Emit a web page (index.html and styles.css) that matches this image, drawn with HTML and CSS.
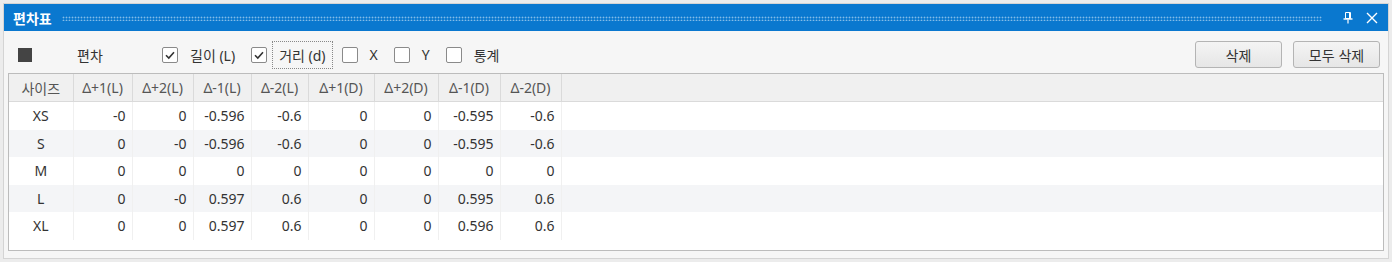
FILE: index.html
```html
<!DOCTYPE html>
<html lang="ko">

<head>
    <meta charset="UTF-8">
    <title>편차표</title>
    <link rel="stylesheet" href="styles.css">
</head>

<body>
    <div class="panel">
        <div class="titlebar">
            <span class="title">편차표</span>
            <span class="grip"></span>
            <span class="tb-btn">
                <svg width="10" height="12" viewBox="0 0 10 12">
                    <path d="M2.5 0.5h5v6h-5z M6.5 0.5v6" fill="none" stroke="#fff" stroke-width="1" />
                    <path d="M0.5 7h9" stroke="#fff" stroke-width="1.4" />
                    <path d="M5 7.5v4" stroke="#fff" stroke-width="1.2" />
                </svg>
            </span>
            <span class="tb-btn">
                <svg width="12" height="12" viewBox="0 0 12 12">
                    <path d="M1 1l10 10M11 1L1 11" stroke="#fff" stroke-width="1.4" />
                </svg>
            </span>
        </div>

        <div class="toolbar">
            <span class="swatch"></span>
            <span class="legend">편차</span>

            <span class="box first"><svg width="14" height="14" viewBox="0 0 14 14"><path d="M3 7.2l2.8 2.8 5.2-5.8" fill="none" stroke="#333" stroke-width="1.6" /></svg></span>
            <span class="check-text">길이 (L)</span>

            <span class="box"><svg width="14" height="14" viewBox="0 0 14 14"><path d="M3 7.2l2.8 2.8 5.2-5.8" fill="none" stroke="#333" stroke-width="1.6" /></svg></span>
            <span class="check-text focus">거리 (d)</span>

            <span class="box"></span>
            <span class="check-text">X</span>

            <span class="box"></span>
            <span class="check-text">Y</span>

            <span class="box"></span>
            <span class="check-text">통계</span>

            <div class="actions">
                <button class="btn">삭제</button>
                <button class="btn">모두 삭제</button>
            </div>
        </div>

        <div class="grid">
            <table>
                <colgroup>
                    <col style="width:64px">
                    <col style="width:59px">
                    <col style="width:61px">
                    <col style="width:58px">
                    <col style="width:57px">
                    <col style="width:66px">
                    <col style="width:64px">
                    <col style="width:62px">
                    <col style="width:61px">
                    <col>
                </colgroup>
                <thead>
                    <tr>
                        <th>사이즈</th>
                        <th>Δ+1(L)</th>
                        <th>Δ+2(L)</th>
                        <th>Δ-1(L)</th>
                        <th>Δ-2(L)</th>
                        <th>Δ+1(D)</th>
                        <th>Δ+2(D)</th>
                        <th>Δ-1(D)</th>
                        <th>Δ-2(D)</th>
                        <th class="fill"></th>
                    </tr>
                </thead>
                <tbody>
                    <tr>
                        <td class="size">XS</td>
                        <td>-0</td><td>0</td><td>-0.596</td><td>-0.6</td>
                        <td>0</td><td>0</td><td>-0.595</td><td>-0.6</td>
                        <td class="fill"></td>
                    </tr>
                    <tr class="alt">
                        <td class="size">S</td>
                        <td>0</td><td>-0</td><td>-0.596</td><td>-0.6</td>
                        <td>0</td><td>0</td><td>-0.595</td><td>-0.6</td>
                        <td class="fill"></td>
                    </tr>
                    <tr>
                        <td class="size">M</td>
                        <td>0</td><td>0</td><td>0</td><td>0</td>
                        <td>0</td><td>0</td><td>0</td><td>0</td>
                        <td class="fill"></td>
                    </tr>
                    <tr class="alt">
                        <td class="size">L</td>
                        <td>0</td><td>-0</td><td>0.597</td><td>0.6</td>
                        <td>0</td><td>0</td><td>0.595</td><td>0.6</td>
                        <td class="fill"></td>
                    </tr>
                    <tr>
                        <td class="size">XL</td>
                        <td>0</td><td>0</td><td>0.597</td><td>0.6</td>
                        <td>0</td><td>0</td><td>0.596</td><td>0.6</td>
                        <td class="fill"></td>
                    </tr>
                </tbody>
            </table>
        </div>
    </div>
</body>

</html>
```

FILE: styles.css
```css
body {
    margin: 0;
    background-color: #ececec;
    font-family: "Noto Sans", "Noto Sans CJK KR", sans-serif;
    font-size: 14px;
    color: #333;
}

.panel {
    margin: 3px;
    height: 254px;
    border: 1px solid #d4d4d4;
    background-color: #f6f6f6;
    display: flex;
    flex-direction: column;
}

/* title bar */

.titlebar {
    height: 27px;
    background-color: #0a78cf;
    display: flex;
    align-items: center;
    padding: 0 6px 0 9px;
}

.title {
    color: #fff;
    font-weight: bold;
    font-size: 14px;
    font-family: "Noto Sans CJK KR", sans-serif;
}

.grip {
    flex: 1;
    height: 5px;
    margin: 1px 12px 0 10px;
    background-image: radial-gradient(circle, rgba(255, 255, 255, 0.5) 0.8px, transparent 1.1px);
    background-size: 3px 3px;
}

.tb-btn {
    width: 20px;
    height: 20px;
    display: flex;
    align-items: center;
    justify-content: center;
    margin-left: 4px;
}

/* toolbar */

.toolbar {
    display: flex;
    align-items: center;
    padding: 10px 8px 5px 14px;
    height: 27px;
}

.swatch {
    width: 14px;
    height: 14px;
    background-color: #444;
}

.legend {
    width: 85px;
    margin-left: 45px;
    font-family: "Noto Sans CJK KR", sans-serif;
}

.box {
    width: 14px;
    height: 14px;
    border: 1px solid #8a8a8a;
    border-radius: 2px;
    background-color: #fff;
    margin-left: 9px;
    display: flex;
}

.box.first {
    margin-left: 0;
}

.check-text {
    margin-left: 5px;
    padding: 3px 6px;
    border: 1px dotted transparent;
}

.check-text.focus {
    border-color: #888;
}

.actions {
    margin-left: auto;
    display: flex;
    gap: 11px;
}

.btn {
    width: 87px;
    height: 27px;
    border: 1px solid #b4b4b4;
    border-radius: 3px;
    background: linear-gradient(#f4f4f4, #e6e6e6);
    font-family: "Noto Sans CJK KR", sans-serif;
    font-size: 14px;
    color: #333;
    padding: 0;
}

/* grid */

.grid {
    margin: 0 4px;
    height: 176px;
    border: 1px solid #bcbcbc;
    background-color: #fff;
}

table {
    width: 100%;
    table-layout: fixed;
    border-collapse: collapse;
}

th {
    height: 27px;
    padding: 0;
    background-color: #f0f0f0;
    border-right: 1px solid #dadada;
    border-bottom: 1px solid #dadada;
    font-weight: normal;
    color: #555;
    text-align: center;
}

td {
    height: 27.5px;
    padding: 0 6px 0 0;
    border-right: 1px solid #f0f0f0;
    text-align: right;
}

td.size {
    text-align: center;
    padding: 0;
}

th.fill,
td.fill {
    border-right: none;
}

tr.alt td {
    background-color: #f4f5f7;
}
```
